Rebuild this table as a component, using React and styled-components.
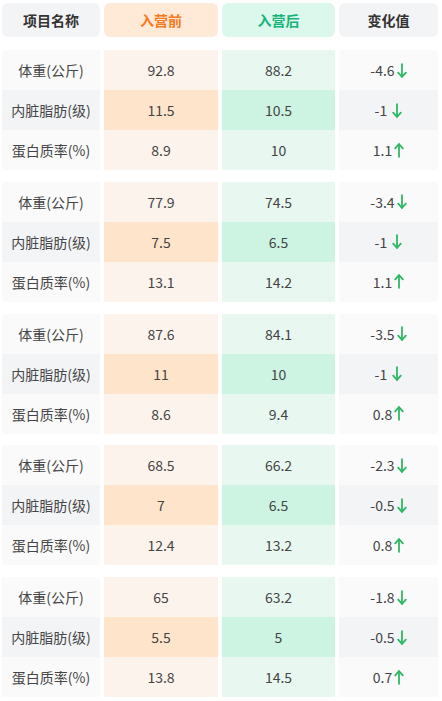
import React from "react";
import styled, { createGlobalStyle } from "styled-components";

const Global = createGlobalStyle`
  html, body { margin: 0; padding: 0; background: #fff; }
  body { font-family: "Noto Sans CJK SC", "Noto Sans", sans-serif; }
`;

const Page = styled.div`
  padding: 3px 4px 0 2px;
  display: flex;
  flex-direction: column;
`;

const Grid = styled.div`
  display: grid;
  grid-template-columns: 98px 114px 113px 99px;
  column-gap: 4px;
`;

const Header = styled(Grid)`
  height: 34px;
  margin-bottom: 13px;
`;

const headBg = ["#f3f4f6", "#ffe9d7", "#dcf8ec", "#f3f4f6"];
const headColor = ["#333", "#f57a1f", "#16b37a", "#333"];

const HeadCell = styled.div`
  border-radius: 6px;
  background: ${(p) => headBg[p.$col]};
  color: ${(p) => headColor[p.$col]};
  font-size: 14px;
  font-weight: 700;
  display: flex;
  align-items: center;
  justify-content: center;
`;

const Groups = styled.div`
  display: flex;
  flex-direction: column;
  gap: 11.75px;
`;

const bg = [
  ["#fafafa", "#fdf3ed", "#e8f8f1", "#fafafa"],
  ["#f3f4f6", "#ffe4cc", "#cdf3e2", "#f3f4f6"],
];

const Row = styled(Grid)`
  height: 40px;
`;

const Cell = styled.div`
  background: ${(p) => bg[p.$alt ? 1 : 0][p.$col]};
  color: #454545;
  font-size: 14px;
  display: flex;
  align-items: center;
  justify-content: center;
  white-space: pre;
`;

const ArrowSvg = styled.svg`
  width: 10px;
  height: 15px;
  margin-left: 2px;
  color: #2fb864;
`;

function Arrow({ down }) {
  return (
    <ArrowSvg viewBox="0 0 10 15" fill="none" stroke="currentColor" strokeWidth="1.8" strokeLinecap="round" strokeLinejoin="round">
      {down ? (
        <>
          <path d="M5 1.2V13.8" />
          <path d="M1.2 9.6L5 13.8L8.8 9.6" />
        </>
      ) : (
        <>
          <path d="M5 13.8V1.2" />
          <path d="M1.2 5.4L5 1.2L8.8 5.4" />
        </>
      )}
    </ArrowSvg>
  );
}

const data = [
  [["体重(公斤)", "92.8", "88.2", "-4.6", "d"], ["内脏脂肪(级)", "11.5", "10.5", "-1 ", "d"], ["蛋白质率(%)", "8.9", "10", "1.1", "u"]],
  [["体重(公斤)", "77.9", "74.5", "-3.4", "d"], ["内脏脂肪(级)", "7.5", "6.5", "-1 ", "d"], ["蛋白质率(%)", "13.1", "14.2", "1.1", "u"]],
  [["体重(公斤)", "87.6", "84.1", "-3.5", "d"], ["内脏脂肪(级)", "11", "10", "-1 ", "d"], ["蛋白质率(%)", "8.6", "9.4", "0.8", "u"]],
  [["体重(公斤)", "68.5", "66.2", "-2.3", "d"], ["内脏脂肪(级)", "7", "6.5", "-0.5", "d"], ["蛋白质率(%)", "12.4", "13.2", "0.8", "u"]],
  [["体重(公斤)", "65", "63.2", "-1.8", "d"], ["内脏脂肪(级)", "5.5", "5", "-0.5", "d"], ["蛋白质率(%)", "13.8", "14.5", "0.7", "u"]],
];

export default function App() {
  return (
    <Page>
      <Global />
      <Header>
        {["项目名称", "入营前", "入营后", "变化值"].map((t, i) => (
          <HeadCell key={i} $col={i}>{t}</HeadCell>
        ))}
      </Header>
      <Groups>
        {data.map((group, gi) => (
          <div key={gi}>
            {group.map((r, ri) => (
              <Row key={ri}>
                <Cell $col={0} $alt={ri === 1}>{r[0]}</Cell>
                <Cell $col={1} $alt={ri === 1}>{r[1]}</Cell>
                <Cell $col={2} $alt={ri === 1}>{r[2]}</Cell>
                <Cell $col={3} $alt={ri === 1}>
                  {r[3]}
                  <Arrow down={r[4] === "d"} />
                </Cell>
              </Row>
            ))}
          </div>
        ))}
      </Groups>
    </Page>
  );
}
